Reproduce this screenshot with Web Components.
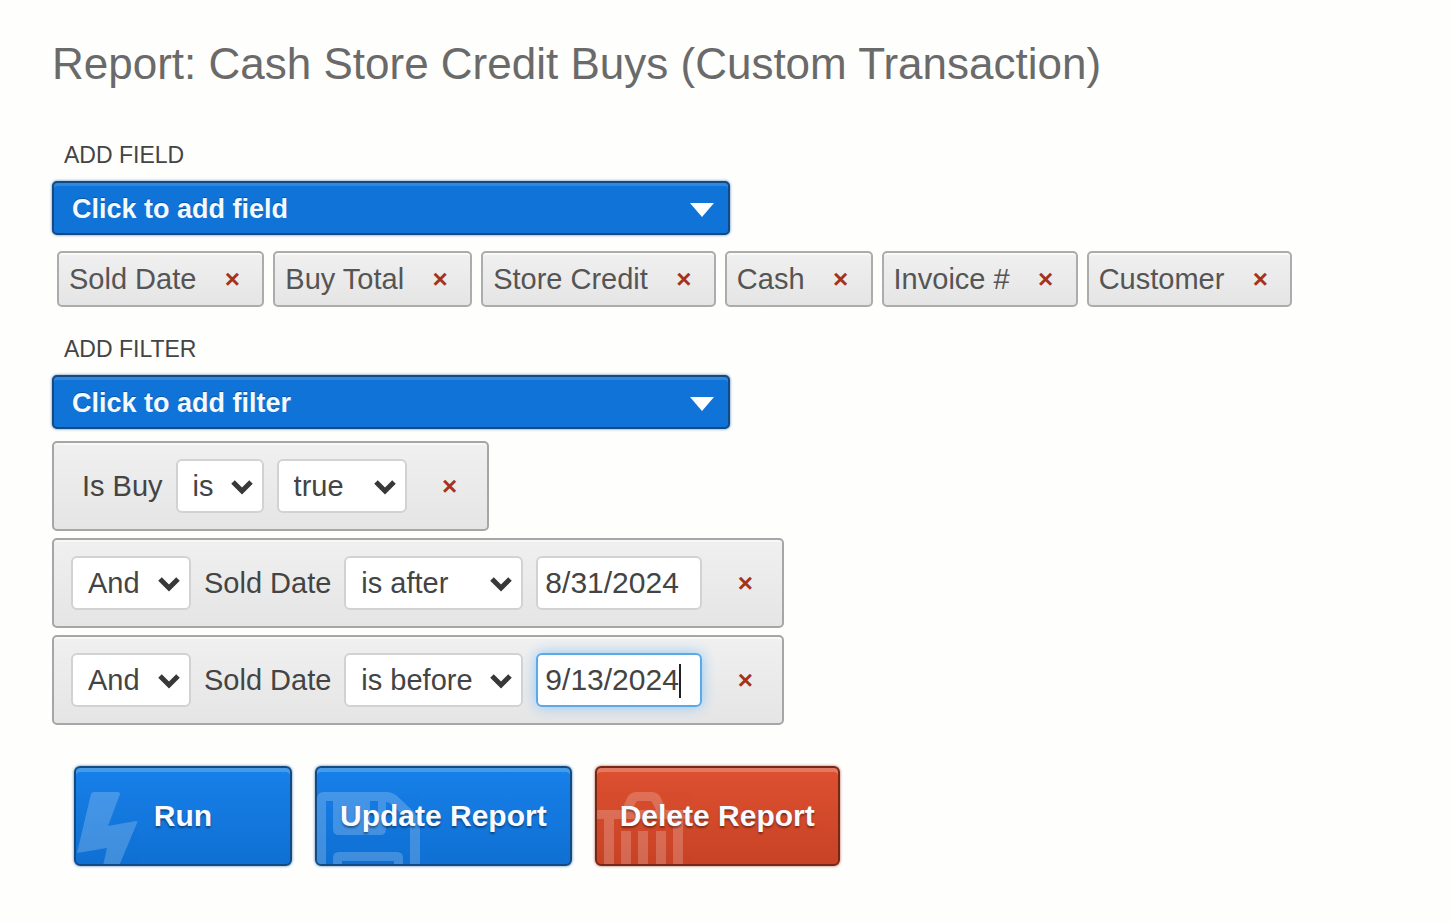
<!DOCTYPE html>
<html lang="en">
<head>
<meta charset="utf-8">
<meta name="viewport" content="width=device-width, initial-scale=1">
<title>Report: Cash Store Credit Buys (Custom Transaction)</title>
<style>
  body { margin: 0; background: #fefefd; font-family: "Liberation Sans", Arial, sans-serif; color: #444; }
</style>
</head>
<body>
<report-page heading="Report: Cash Store Credit Buys (Custom Transaction)">
  <add-picker slot="fields" label="Add field" prompt="Click to add field"></add-picker>
  <field-chip slot="chips">Sold Date</field-chip>
  <field-chip slot="chips">Buy Total</field-chip>
  <field-chip slot="chips">Store Credit</field-chip>
  <field-chip slot="chips">Cash</field-chip>
  <field-chip slot="chips">Invoice #</field-chip>
  <field-chip slot="chips">Customer</field-chip>
  <add-picker slot="filters" label="Add filter" prompt="Click to add filter"></add-picker>
  <filter-row slot="rows" first>
    <span>Is Buy</span>
    <choice-box value="is" label="Comparison"></choice-box>
    <choice-box value="true" label="Value" size="medium"></choice-box>
  </filter-row>
  <filter-row slot="rows">
    <choice-box value="And" label="Join" size="small"></choice-box>
    <span>Sold Date</span>
    <choice-box value="is after" label="Comparison" size="large"></choice-box>
    <date-box value="8/31/2024"></date-box>
  </filter-row>
  <filter-row slot="rows">
    <choice-box value="And" label="Join" size="small"></choice-box>
    <span>Sold Date</span>
    <choice-box value="is before" label="Comparison" size="large"></choice-box>
    <date-box value="9/13/2024" active></date-box>
  </filter-row>
  <action-button slot="actions">
    <svg slot="icon" width="64" height="76" viewBox="0 0 64 76"><path fill="#fff" d="M18 2h24q2 0 2 2L32 36l28-5q2 0 1 2L43 76H27l4-18-30 5L15 4q1-2 3-2z"/></svg>
    Run
  </action-button>
  <action-button slot="actions">
    <svg slot="icon" width="106" height="76" viewBox="0 0 106 76"><path fill="#fff" fill-rule="evenodd" d="M7 2h62q6 0 11 4l18 17q5 5 5 11v44H0V9q0-7 7-7zm2 9v67h84V35q0-3-3-6L74 14q-2-2-5-2v27q0 6-6 6H22q-6 0-6-6V11zm44 0v23h8V11zM22 62h58q6 0 6 6v10H16V68q0-6 6-6zm3 9v7h52v-7z"/></svg>
    Update Report
  </action-button>
  <action-button slot="actions" kind="danger">
    <svg slot="icon" width="94" height="76" viewBox="0 0 94 76"><path fill="#fff" fill-rule="evenodd" d="M0 20h25l5-12q3-6 9-6h16q6 0 9 6l5 12h25v9h-8v49H7V29H0zm35 0h24l-4-8q-1-1-2-1H41q-1 0-2 1zM17 29v49h7V41h10v37h7V41h10v37h8V41h10v37h7V29z"/></svg>
    Delete Report
  </action-button>
</report-page>

<script>
  const define = (name, render) => customElements.define(name, class extends HTMLElement {
    constructor() {
      super();
      this.attachShadow({ mode: "open" });
    }
    connectedCallback() {
      this.shadowRoot.innerHTML = render(this);
    }
  });

  const removeStyle = `
    .remove { width: 16px; height: 32px; flex: none; padding: 0; border: 0; background: none;
      font: bold 26px/32px "Liberation Sans", Arial, sans-serif; color: #a5331c; cursor: pointer; }`;

  define("report-page", el => `
    <style>
      :host { display: block; padding: 37px 52px 56px; }
      h1 { margin: 0 0 50px; font-size: 44px; line-height: 54px; font-weight: normal; color: #6a6a6a; }
      .chips { display: flex; flex-wrap: wrap; gap: 9px; margin: 16px 0 28px; padding-left: 5px; }
      .rows { display: flex; flex-direction: column; align-items: flex-start; gap: 7px; margin-top: 12px; }
      .actions { display: flex; flex-wrap: wrap; gap: 23px; margin-top: 41px; padding-left: 22px; }
    </style>
    <main>
      <h1>${el.getAttribute("heading")}</h1>
      <slot name="fields"></slot>
      <div class="chips"><slot name="chips"></slot></div>
      <slot name="filters"></slot>
      <div class="rows"><slot name="rows"></slot></div>
      <div class="actions"><slot name="actions"></slot></div>
    </main>`);

  define("add-picker", el => `
    <style>
      :host { display: block; max-width: 678px; }
      label { display: block; margin: 0 0 12px 12px; font-size: 23px; line-height: 28px; text-transform: uppercase; color: #444; }
      .box { position: relative; }
      select { appearance: none; display: block; box-sizing: border-box; width: 100%; height: 54px; padding: 2px 50px 0 18px;
        border: 2px solid #154a80; border-radius: 5px; background: #1073d7; box-shadow: inset 0 3px #2f88e0, 0 0 3px #4c83b8;
        font: bold 27px "Liberation Sans", Arial, sans-serif; color: #f2faff; text-shadow: 0 -1px #0c559f; }
      svg { position: absolute; right: 15px; top: 21px; pointer-events: none; }
    </style>
    <label for="pick">${el.getAttribute("label")}</label>
    <div class="box">
      <select id="pick"><option>${el.getAttribute("prompt")}</option></select>
      <svg width="26" height="16" viewBox="0 0 26 16"><path fill="#fff" d="M1 1h24L13 15z"/></svg>
    </div>`);

  define("field-chip", () => `
    <style>
      :host { display: flex; align-items: center; box-sizing: border-box; height: 56px; padding: 0 22px 0 10px;
        border: 2px solid #acacac; border-radius: 5px; background: linear-gradient(#f0f0f0, #e5e5e5);
        box-shadow: inset 0 2px #fafafa; font-size: 29px; line-height: 34px; color: #555; gap: 28px; white-space: nowrap; }
      ${removeStyle}
    </style>
    <span><slot></slot></span><button class="remove" aria-label="Remove field">×</button>`);

  define("filter-row", () => `
    <style>
      :host { display: flex; align-items: center; gap: 13px; box-sizing: border-box; height: 90px; padding: 0 29px 0 17px;
        border: 2px solid #a6a6a6; border-radius: 5px; background: linear-gradient(#f0f0f0, #e5e5e5);
        box-shadow: inset 0 2px #f8f8f8; font-size: 29px; line-height: 34px; color: #444; white-space: nowrap; }
      :host([first]) { padding-left: 28px; }
      .remove { margin-left: 22px; }
      ${removeStyle}
    </style>
    <slot></slot><button class="remove" aria-label="Remove filter">×</button>`);

  define("choice-box", el => `
    <style>
      :host { display: block; position: relative; width: 88px; }
      :host([size="small"]) { width: 120px; }
      :host([size="medium"]) { width: 130px; }
      :host([size="large"]) { width: 179px; }
      select { appearance: none; display: block; box-sizing: border-box; width: 100%; height: 54px; padding: 0 0 0 15px;
        border: 2px solid #d2d2d2; border-radius: 6px; background: #fff; color: #444;
        font: 29px "Liberation Sans", Arial, sans-serif; }
      svg { position: absolute; right: 10px; top: 20px; pointer-events: none; }
    </style>
    <select aria-label="${el.getAttribute("label")}"><option>${el.getAttribute("value")}</option></select>
    <svg width="24" height="16" viewBox="0 0 24 16"><path d="M3 3l9 9 9-9" fill="none" stroke="#383838" stroke-width="5"/></svg>`);

  define("date-box", el => `
    <style>
      :host { display: block; position: relative; width: 166px; }
      input { display: block; box-sizing: border-box; width: 100%; height: 54px; padding: 0 0 0 7px;
        border: 2px solid #d2d2d2; border-radius: 6px; background: #fff; color: #444; outline: none;
        font: 30px "Liberation Sans", Arial, sans-serif; }
      :host([active]) input { border-color: #5ca9ea; box-shadow: 0 0 14px #8fc6f4; caret-color: transparent; }
      .caret { display: none; position: absolute; left: 143px; top: 11px; width: 2px; height: 34px; background: #222; }
      :host([active]) .caret { display: block; }
    </style>
    <input type="text" aria-label="Date" value="${el.getAttribute("value")}">
    <span class="caret"></span>`);

  define("action-button", () => `
    <style>
      :host { display: block; }
      button { position: relative; overflow: hidden; box-sizing: border-box; min-width: 218px; height: 100px; padding: 0 23px;
        border: 2px solid #154a80; border-radius: 6px; background: linear-gradient(#1780e9, #1070d3);
        box-shadow: inset 0 4px #469be9, 0 0 3px #4c83b8; color: #f8fbff; white-space: nowrap;
        font: bold 30px/36px "Liberation Sans", Arial, sans-serif; text-shadow: 0 2px 2px #0006; cursor: pointer; }
      :host([kind="danger"]) button { border-color: #762817; background: linear-gradient(#dd5030, #c84326);
        box-shadow: inset 0 4px #e27962, 0 0 3px #b06553; }
      ::slotted(svg) { position: absolute; left: 0; bottom: -2px; opacity: .2; }
      span { position: relative; }
    </style>
    <button><slot name="icon"></slot><span><slot></slot></span></button>`);
</script>
</body>
</html>
